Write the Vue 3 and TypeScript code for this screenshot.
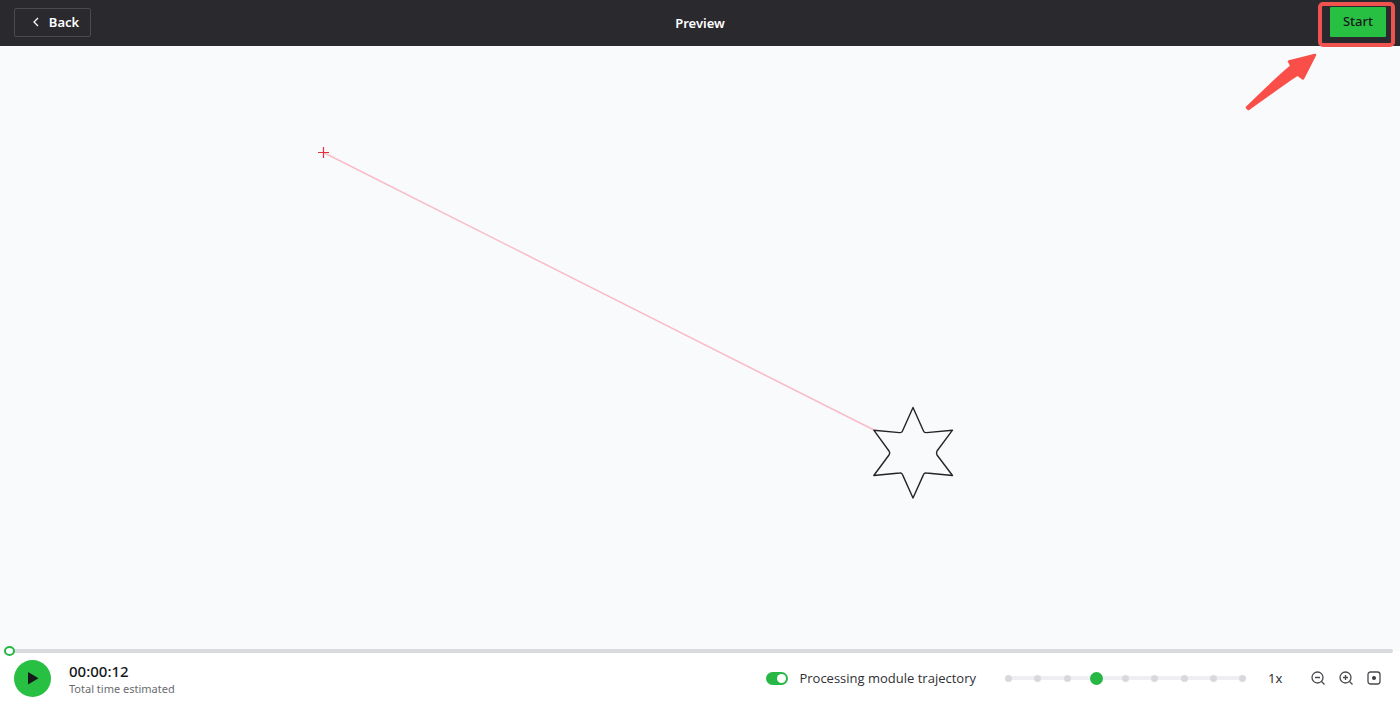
<script setup lang="ts">
import { computed, ref } from 'vue'

const playing = ref(false)
const progress = ref(0)
const trajectory = ref(true)
const speedStep = ref(3)
const speeds = [0.25, 0.5, 0.75, 1, 2, 4, 8, 16, 32]
const speedLabel = computed(() => `${speeds[speedStep.value]}x`)
</script>

<template>
  <div class="page">
    <header class="topbar">
      <div class="side">
        <button class="back" type="button">
          <svg width="8" height="10" viewBox="0 0 8 10" aria-hidden="true">
            <path d="M6 1 2 5l4 4" fill="none" stroke="currentColor" stroke-width="1.3" />
          </svg>
          <span>Back</span>
        </button>
      </div>
      <h1 class="title">Preview</h1>
      <div class="side end">
        <button class="start" type="button">Start</button>
      </div>
      <div class="highlight" aria-hidden="true"></div>
      <svg class="arrow" width="74" height="60" viewBox="0 0 74 60" aria-hidden="true">
        <path
          d="M72 3 60 26.500 54.500 22.500Q46 28 5.500 57L4 55.500Q34 26 48.500 14L46 9.500Z"
          fill="#f94f48"
          stroke="#f94f48"
          stroke-width="2.500"
          stroke-linejoin="round"
        />
      </svg>
    </header>

    <main class="stage">
      <svg class="drawing" viewBox="0 0 1400 605" role="img" aria-label="Tool path">
        <path v-if="trajectory" d="M323.500 106.500 874 384" fill="none" stroke="#f9bcc6" stroke-width="1.500" />
        <path d="M318 106.500h11M323.500 101v11" fill="none" stroke="#e0323c" stroke-width="1.200" />
        <path
          d="M913 361.500 923.500 385Q924.300 387 926.500 386.600L952.500 384.200 937 405Q936 407 937 409L952.500 429.500 926.500 427Q924.300 426.600 923.500 428.600L913 452 902.500 428.600Q901.700 426.600 899.500 427L873.800 429.500 889 409Q890.500 407 889 405L873.800 384.200 899.500 386.600Q901.700 387 902.500 385Z"
          fill="none"
          stroke="#242428"
          stroke-width="1.400"
          stroke-linejoin="round"
        />
      </svg>
    </main>

    <footer class="footer">
      <div class="timeline">
        <input v-model.number="progress" class="seek" type="range" min="0" max="12" aria-label="Playback position" />
      </div>
      <div class="controls">
        <button class="play" type="button" aria-label="Play" @click="playing = !playing">
          <svg width="12" height="14" viewBox="0 0 12 14" aria-hidden="true">
            <path d="M1 1v12.500L11.500 7.200Z" fill="#18181b" />
          </svg>
        </button>
        <div class="time">
          <div class="clock">00:00:12</div>
          <div class="caption">Total time estimated</div>
        </div>
        <label class="toggle">
          <input v-model="trajectory" type="checkbox" class="switch" />
          <span>Processing module trajectory</span>
        </label>
        <div class="speed">
          <span v-for="n in speeds" :key="n" class="dot"></span>
          <input v-model.number="speedStep" class="speed-input" type="range" min="0" max="8" aria-label="Speed" />
        </div>
        <output class="rate">{{ speedLabel }}</output>
        <div class="tools">
          <button type="button" aria-label="Zoom out">
            <svg width="14" height="14" viewBox="0 0 14 14" aria-hidden="true">
              <circle cx="6.500" cy="6.500" r="5.500" />
              <path d="M4 6.500h5M10.500 10.500l3 3" />
            </svg>
          </button>
          <button type="button" aria-label="Zoom in">
            <svg width="14" height="14" viewBox="0 0 14 14" aria-hidden="true">
              <circle cx="6.500" cy="6.500" r="5.500" />
              <path d="M4 6.500h5M6.500 4v5M10.500 10.500l3 3" />
            </svg>
          </button>
          <button type="button" aria-label="Fit to view">
            <svg width="14" height="14" viewBox="0 0 14 14" aria-hidden="true">
              <rect x="1" y="1" width="12" height="12" rx="2.500" />
              <circle class="solid" cx="7" cy="7" r="2" />
            </svg>
          </button>
        </div>
      </div>
    </footer>
  </div>
</template>

<style>
body {
  margin: 0;
}
</style>

<style scoped>
.page {
  display: flex;
  flex-direction: column;
  min-height: 100vh;
  background: #fff;
  color: #18181b;
  font-family: "Noto Sans", "Open Sans", sans-serif;
  font-size: 13px;
  line-height: 18px;
}

button {
  padding: 0;
  border: 0;
  background: none;
  color: inherit;
  font: inherit;
  cursor: pointer;
}

.topbar {
  position: relative;
  display: flex;
  align-items: center;
  box-sizing: border-box;
  height: 46px;
  padding: 0 14px;
  background: #29292e;
}

.side {
  display: flex;
  flex: 1;
  padding-bottom: 2px;
}

.end {
  justify-content: flex-end;
}

.back {
  display: flex;
  align-items: center;
  justify-content: center;
  gap: 9px;
  box-sizing: border-box;
  width: 77px;
  height: 29px;
  padding-left: 6px;
  border: 1px solid #4a4a4f;
  border-radius: 2px;
  color: #fff;
  font-weight: 600;
}

.title {
  margin: 0;
  color: #fff;
  font-size: 13px;
  font-weight: 600;
}

.start {
  width: 56px;
  height: 30px;
  padding-bottom: 2px;
  border-radius: 1px;
  background: #27c043;
  color: #18181b;
  font-weight: 500;
}

.highlight {
  position: absolute;
  top: 2px;
  right: 5px;
  box-sizing: border-box;
  width: 77px;
  height: 45px;
  border: 4px solid #f0524f;
  border-radius: 5px;
  pointer-events: none;
}

.arrow {
  position: absolute;
  top: 52px;
  right: 83px;
  pointer-events: none;
}

.stage {
  display: flex;
  flex: 1;
  min-height: 0;
  background: #f8fafc;
}

.drawing {
  width: 100%;
}

.timeline {
  display: flex;
  height: 12px;
  margin-top: -6px;
  padding: 0 7px 0 4px;
}

.seek,
.speed-input {
  appearance: none;
  margin: 0;
  background: none;
  cursor: pointer;
}

.seek {
  width: 100%;
  height: 12px;
}

.seek::-webkit-slider-runnable-track {
  height: 4px;
  border-radius: 2px;
  background: #d9dadd;
}

.seek::-webkit-slider-thumb {
  appearance: none;
  box-sizing: border-box;
  width: 11px;
  height: 10px;
  margin-top: -3px;
  border: 2px solid #27b744;
  border-radius: 50%;
  background: #fff;
}

.controls {
  display: flex;
  align-items: center;
  height: 42px;
  padding: 0 19px 15px 14px;
}

.play {
  display: flex;
  align-items: center;
  justify-content: center;
  width: 37px;
  height: 37px;
  border-radius: 50%;
  background: #27c043;
}

.time {
  margin-left: 18px;
  padding-top: 4px;
}

.clock {
  font-size: 15px;
  font-weight: 500;
}

.caption {
  color: #6b6b70;
  font-size: 11px;
}

.toggle {
  display: flex;
  align-items: center;
  gap: 11px;
  margin-left: auto;
  color: #303035;
  font-family: "Open Sans", "Noto Sans", sans-serif;
  cursor: pointer;
}

.switch {
  appearance: none;
  display: flex;
  align-items: center;
  box-sizing: border-box;
  width: 22px;
  height: 13px;
  margin: 0;
  padding: 2px;
  border-radius: 7px;
  background: #b8b8bd;
  cursor: pointer;
}

.switch::before {
  content: "";
  width: 9px;
  height: 9px;
  border-radius: 50%;
  background: #fff;
}

.switch:checked {
  justify-content: flex-end;
  background: #27b744;
}

.speed {
  position: relative;
  display: flex;
  align-items: center;
  justify-content: space-between;
  box-sizing: border-box;
  width: 247px;
  height: 14px;
  margin-left: 26px;
  padding: 0 3px;
  background: linear-gradient(#efeff2, #efeff2) center / 234px 4px no-repeat;
}

.dot {
  width: 7px;
  height: 7px;
  border-radius: 50%;
  background: #d9d9dd;
}

.speed-input {
  position: absolute;
  inset: 0;
  width: 100%;
  height: 100%;
}

.speed-input::-webkit-slider-thumb {
  appearance: none;
  width: 13px;
  height: 13px;
  border-radius: 50%;
  background: #27b744;
}

.rate {
  width: 25px;
  margin-left: 19px;
  color: #303035;
}

.tools {
  display: flex;
  gap: 14px;
  margin-left: 18px;
}

.tools button {
  display: flex;
}

.tools svg {
  fill: none;
  stroke: #4a4a4f;
  stroke-width: 1.3;
}

.tools .solid {
  fill: #3a3a3f;
  stroke: none;
}
</style>
